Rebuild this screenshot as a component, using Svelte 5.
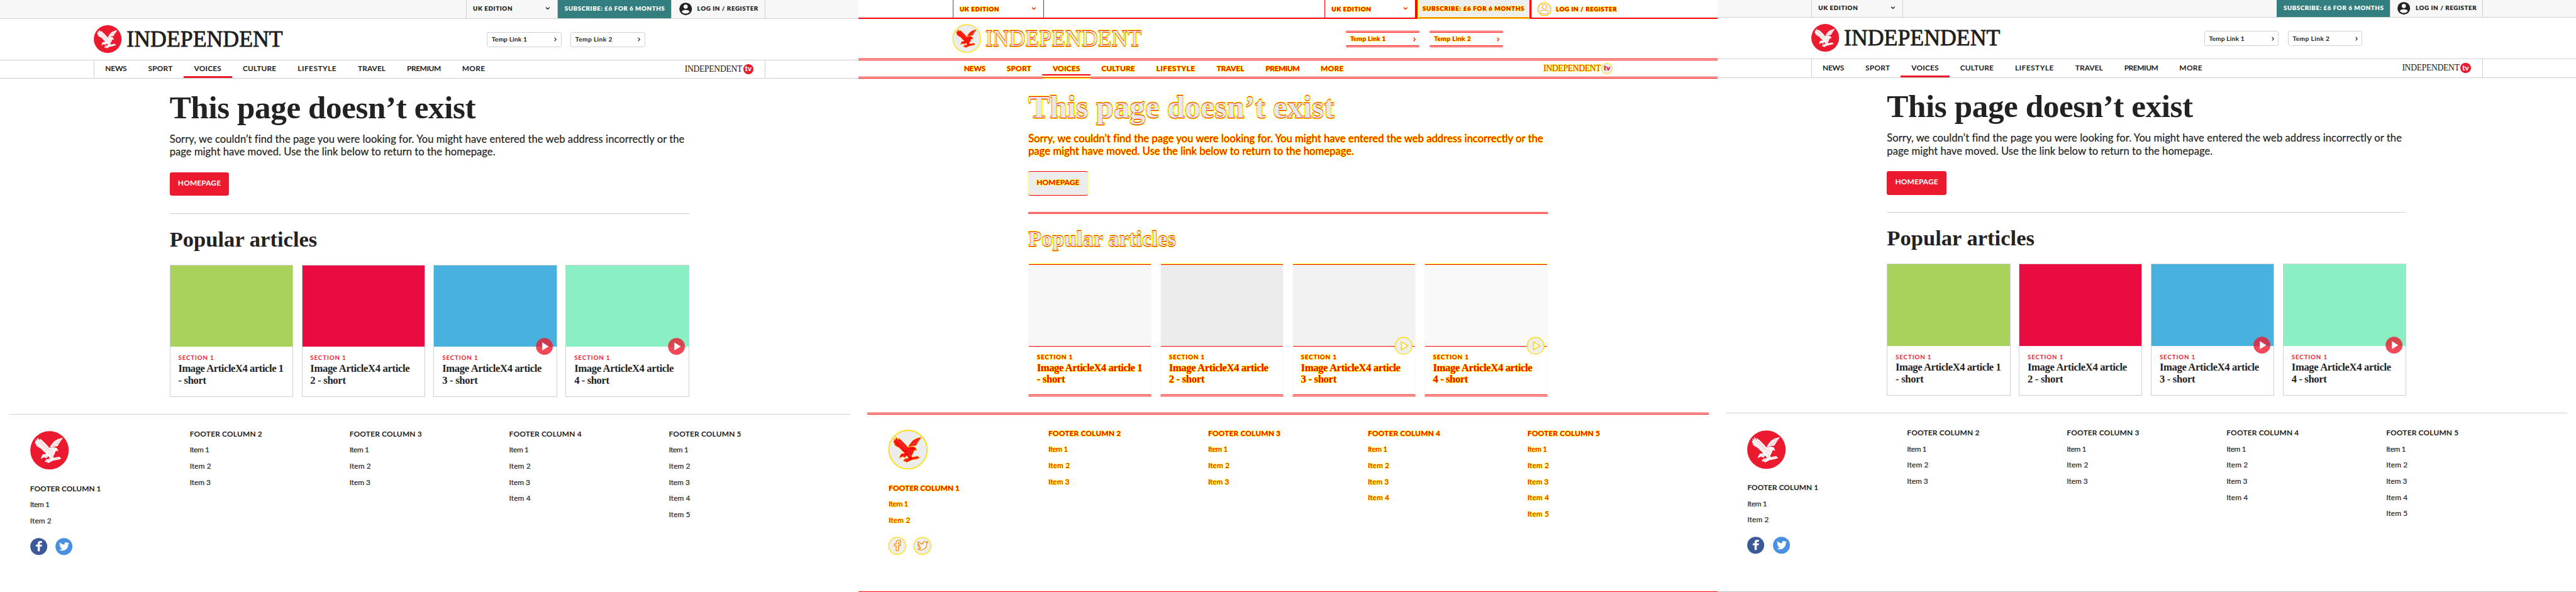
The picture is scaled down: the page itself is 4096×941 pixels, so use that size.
<script>
  const UNIT = 4096 / 4800;

  // Spreads the letters of a label so that it takes the given width.
  function fit(node, width) {
    const natural = node.getBoundingClientRect().width;
    const count = node.textContent.length;
    node.style.letterSpacing = (width * UNIT - natural) / count + 'px';
  }

  const panels = ['before', 'diff', 'after'];

  const nav = [
    ['NEWS', 40], ['SPORT', 46], ['VOICES', 51], ['CULTURE', 62.5],
    ['LIFESTYLE', 72.5], ['TRAVEL', 51.5], ['PREMIUM', 63], ['MORE', 43]
  ];

  const cards = [
    { tone: 'green', lines: [['Image ArticleX4 article 1', 196], ['- short', 52]] },
    { tone: 'crimson', lines: [['Image ArticleX4 article', 185], ['2 - short', 66]] },
    { tone: 'blue', play: true, lines: [['Image ArticleX4 article', 185], ['3 - short', 66]] },
    { tone: 'mint', play: true, lines: [['Image ArticleX4 article', 185], ['4 - short', 65]] }
  ];

  const columns = [2, 3, 3, 4, 5];
  const itemWidths = [36, 40, 39, 40, 40];
</script>

{#snippet eagle()}
  <svg class="eagle" viewBox="0 0 72 72">
    <circle class="disc" cx="36" cy="36" r="35.8" />
    <g class="bird">
      <path d="M13.5 12 L18 18 L18 14 L24 19 L31 26 L36 32 L39 31 L45 30.5 L50 32 L52.5 38 L49 37 L47 38 L46 42 L43 47 L43.5 50 L54 48 L58 51.5 L52 53.5 L42 55.5 L39 57 L33 60 L32 58 L27 57.5 L30 53 L37 52 L34 47 L30 51 L26 49 L19.500 52 L23 44 L30 42.500 L24 37 L20 33 L12 28 L8.500 20 L10.500 20 L10 15 L13 18 Z" />
      <path d="M61 12.500 L52 15 L45 19 L39 26 L36.500 31 L43 30 L51 28 L54 23 L57 19 Z" />
    </g>
    <g class="hatch">
      <path d="M13 18 L31 38 M17 18 L34 37 M21 20 L36 36 M11 23 L25 36 M39 28 L56 14 M41 29 L58 16 M44 29.500 L57 18 M36 37 L45 43 M38 34 L45 39 M34 40 L42 46 M25 49 L30 45 M28 50 L32 46 M30 56 L38 54 M39 46 L40 51 M46 52 L54 51" />
    </g>
  </svg>
{/snippet}

{#snippet edition()}
  <div class="edition">
    <span class="t" use:fit={74}>UK EDITION</span>
    <svg class="down" viewBox="0 0 10 6"><path d="M1.300 1 L5 4.600 L8.700 1" /></svg>
  </div>
{/snippet}

{#snippet page(kind)}
  <section class="page {kind}">
    <div class="topbar">
      <div class="inner">
        {#if kind !== 'before'}{@render edition()}{/if}
        <div class="push"></div>
        {#if kind !== 'after'}{@render edition()}{/if}
        <div class="subscribe"><span class="t" use:fit={kind === 'diff' ? 190 : 187}>SUBSCRIBE: £6 FOR 6 MONTHS</span></div>
        <div class="login">
          <svg class="user" viewBox="0 0 24 24">
            <circle class="face" cx="12" cy="12" r="11.800" />
            <circle class="cut" cx="12" cy="7.700" r="3.900" />
            <path class="cut" d="M4.800 17.200 C5.200 12.800 18.800 12.800 19.200 17.200 C16 21.800 8 21.800 4.800 17.200 Z" />
          </svg>
          <span class="t" use:fit={114}>LOG IN / REGISTER</span>
        </div>
      </div>
    </div>

    <header>
      {@render eagle()}
      <div class="wordmark"><span class="t big" use:fit={291}>INDEPENDENT</span></div>
      <div class="links">
        {#each [['Temp Link 1', 66], ['Temp Link 2', 69]] as [label, width]}
          <a class="link" href="#top">
            <span class="t" use:fit={width}>{label}</span>
            <svg class="right" viewBox="0 0 6 10"><path d="M1 1 L4.600 5 L1 9" /></svg>
          </a>
        {/each}
      </div>
    </header>

    <nav>
      <div class="inner">
        {#each nav as [label, width]}
          <div class="tab" class:active={label === 'VOICES'}><span class="t" use:fit={width}>{label}</span></div>
        {/each}
        <div class="push"></div>
        <div class="tv"><span class="t small-mark" use:fit={107}>INDEPENDENT</span><span class="dot">tv</span></div>
      </div>
    </nav>

    <main>
      <h1><span class="t big" use:fit={570}>This page doesn’t exist</span></h1>
      <p>
        <span class="t" use:fit={959}>Sorry, we couldn’t find the page you were looking for. You might have entered the web address incorrectly or the</span>
        <span class="t" use:fit={607}>page might have moved. Use the link below to return to the homepage.</span>
      </p>
      <div class="button"><span class="t" use:fit={80}>HOMEPAGE</span></div>
      <div class="rule"></div>
      <h2><span class="t big" use:fit={275}>Popular articles</span></h2>
      <div class="cards">
        {#each cards as card}
          <article>
            <div class="photo {card.tone}">
              {#if card.play}
                <svg class="play" viewBox="0 0 32 32"><circle cx="16" cy="16" r="15.700" /><path d="M12 8.500 L24 16 L12 23.500 Z" /></svg>
              {/if}
            </div>
            <div class="copy">
              <div class="label"><span class="t" use:fit={67}>SECTION 1</span></div>
              {#each card.lines as [text, width]}
                <div class="title"><span class="t" use:fit={width}>{text}</span></div>
              {/each}
            </div>
          </article>
        {/each}
      </div>
    </main>

    <footer>
      {#each columns as count, i}
        <div class="column">
          {#if i === 0}{@render eagle()}{/if}
          <h3><span class="t" use:fit={i === 0 ? 132 : 135}>FOOTER COLUMN {i + 1}</span></h3>
          {#each itemWidths.slice(0, count) as width, n}
            <div class="item"><span class="t" use:fit={width}>Item {n + 1}</span></div>
          {/each}
          {#if i === 0}
            <div class="social">
              <svg viewBox="0 0 32 32"><circle class="fb" cx="16" cy="16" r="15.800" /><path class="glyph" d="M14 25 V16 H10.500 V12.700 H14 V10.500 C14 7.500 15.800 6 18.300 6 H22 V9.500 H19.800 C18.500 9.500 18 10.100 18 11.200 V12.700 H22 L21.600 16 H18 V25 Z" /></svg>
              <svg viewBox="0 0 32 32"><circle class="tw" cx="16" cy="16" r="15.800" /><path class="glyph" d="M26 9.900 C25.300 10.200 24.500 10.400 23.800 10.500 C24.600 10 25.200 9.300 25.500 8.400 C24.700 8.800 23.900 9.200 23 9.300 C20.500 6.700 16 8.700 16.800 12.600 C13.400 12.400 10.400 10.800 8.400 8.300 C7.300 10.200 7.900 12.600 9.700 13.800 C9 13.800 8.400 13.600 7.800 13.300 C7.800 15.200 9.200 16.900 11.100 17.300 C10.500 17.500 9.900 17.500 9.200 17.400 C9.800 19 11.200 20.200 13 20.200 C11.300 21.600 9.100 22.200 7 21.900 C14 26.300 24 22.300 24 12.400 V11.800 C24.800 11.300 25.400 10.600 26 9.900 Z" /></svg>
            </div>
          {/if}
        </div>
      {/each}
    </footer>
  </section>
{/snippet}

<div class="sheet">
  {#each panels as kind}
    {@render page(kind)}
  {/each}
</div>

<style>
  :global(html) { font-size: 8.53333px; }
  :global(body) { margin: 0; background: #fff; overflow: hidden; }
  * { box-sizing: border-box; }

  .sheet {
    display: flex;
    width: 480rem;
    height: 941px;
    overflow: hidden;
    font-family: Lato, "Open Sans", sans-serif;
    color: #222;
  }
  .page {
    --line: #d0d0d0;
    --red: #ec1a2e;
    width: 160rem;
    height: 941px;
    flex: none;
    overflow: hidden;
    background: #fff;
  }
  .after { box-shadow: inset 0 -1px #bbb; }
  .t { display: inline-block; white-space: pre; }
  .push { flex: 1; }
  svg { display: block; flex: none; overflow: visible; }

  .topbar { height: 3.5rem; background: #f7f7f7; border-bottom: 1px solid var(--line); }
  .after .topbar { height: 3.3rem; }
  .inner { display: flex; width: 125.1rem; height: 100%; margin-left: 17.5rem; }
  .edition, .subscribe, .login {
    display: flex;
    align-items: center;
    font-size: 1.15rem;
    font-weight: 800;
    padding-bottom: 0.28rem;
  }
  .edition {
    width: 17.1rem;
    padding-left: 1.2rem;
    padding-right: 1.3rem;
    justify-content: space-between;
    border-left: 1px solid var(--line);
    border-right: 1px solid var(--line);
  }
  .down { width: 0.9rem; height: 0.55rem; }
  .down path, .right path { fill: none; stroke: #222; stroke-width: 1.7; }
  .subscribe { width: 21.1rem; padding-left: 1.3rem; background: #337f80; color: #fff; }
  .login { width: 17.6rem; padding-left: 1.4rem; gap: 1rem; border-left: 1px solid var(--line); border-right: 1px solid var(--line); }
  .after .login { width: 17.3rem; padding-left: 1.3rem; }
  .user { width: 2.4rem; height: 2.4rem; margin-top: 0.28rem; }
  .user .face { fill: #222; }
  .user .cut { fill: #f7f7f7; }

  header { display: flex; align-items: flex-start; height: 7.6rem; padding: 1.2rem 0 0 17.5rem; }
  header .eagle { width: 5.2rem; height: 5.2rem; }
  .wordmark {
    width: 67.1rem;
    padding-left: 0.9rem;
    font: 400 4.2rem/5.2rem "Liberation Serif", serif;
    color: #1d1d1b;
    -webkit-text-stroke: 0.09rem #1d1d1b;
  }
  .links { display: flex; gap: 1.7rem; padding: 1.3rem 0 0 0.9rem; }
  .link {
    display: flex;
    align-items: center;
    justify-content: space-between;
    width: 13.9rem;
    height: 2.8rem;
    padding: 0 0.7rem 0.2rem 0.8rem;
    border: 1px solid var(--line);
    border-radius: 0.4rem;
    font-size: 1.2rem;
    font-weight: 700;
    color: #222;
    text-decoration: none;
  }
  .right { width: 0.5rem; height: 0.85rem; margin-top: 0.2rem; }

  nav { height: 3.6rem; border-top: 1px solid var(--line); border-bottom: 1px solid var(--line); }
  nav .inner { border-left: 1px solid var(--line); border-right: 1px solid var(--line); }
  .tab { display: flex; align-items: center; padding: 0 1.99rem; font-size: 1.4rem; font-weight: 700; border-bottom: 0.4rem solid transparent; padding-top: 0.1rem; }
  .tab.active { border-bottom-color: var(--red); }
  .tv { display: flex; align-items: center; gap: 0.2rem; padding: 0 2.1rem 0.1rem 0; }
  .small-mark { font: 400 1.6rem/2rem "Liberation Serif", serif; color: #1d1d1b; }
  .dot {
    display: grid;
    place-items: center;
    width: 1.9rem;
    height: 1.9rem;
    border-radius: 50%;
    background: var(--red);
    color: #fff;
    font: 900 1.35rem/1.3rem Lato, sans-serif;
    padding-bottom: 0.2rem;
  }

  main { padding: 2.2rem 31.6rem 0; }
  h1, h2, h3, p { margin: 0; }
  h1 { font: 700 6rem/6.4rem "Liberation Serif", serif; height: 6.4rem; }
  p { margin-top: 1.4rem; height: 4.8rem; margin-bottom: 0.1rem; font-size: 1.95rem; line-height: 2.4rem; -webkit-text-stroke: 0.02rem #222; }
  p .t { display: table; }
  .button {
    display: flex;
    align-items: center;
    justify-content: center;
    width: 11.1rem;
    height: 4.4rem;
    margin-top: 2.6rem;
    padding-bottom: 0.46rem;
    border-radius: 0.4rem;
    background: var(--red);
    color: #fff;
    font-size: 1.4rem;
    font-weight: 700;
  }
  .rule { height: 1px; margin-top: 3.2rem; background: var(--line); }
  h2 { margin-top: 2.6rem; font: 700 4.05rem/4.4rem "Liberation Serif", serif; height: 4.4rem; }
  .cards { display: grid; grid-template-columns: repeat(4, 23rem); gap: 1.6rem; margin-top: 2.5rem; }
  article { height: 24.6rem; border: 1px solid var(--line); }
  .photo { position: relative; height: 15.2rem; }
  .green { background: #a9d25d; }
  .crimson { background: #ea0b40; }
  .blue { background: #49b1de; }
  .mint { background: #8af0c4; }
  .play { position: absolute; right: 0.6rem; bottom: -1.5rem; width: 3.2rem; height: 3.2rem; }
  .play circle { fill: var(--red); opacity: 0.8; }
  .play path { fill: #fff; }
  .copy { padding: 1.4rem 0 0 1.5rem; }
  .label { font-size: 1.15rem; line-height: 1.4rem; height: 1.4rem; font-weight: 700; color: var(--red); margin-bottom: 0.2rem; }
  .title { font: 700 1.95rem/2.2rem "Liberation Serif", serif; height: 2.2rem; }

  footer {
    display: grid;
    grid-template-columns: repeat(5, 29.76rem);
    width: 156.8rem;
    margin: 3.15rem 1.6rem 0;
    padding: 2.15rem 0 0 4rem;
    border-top: 1px solid var(--line);
  }
  .column .eagle { width: 7.2rem; height: 7.2rem; margin: 1rem 0 2rem; }
  h3 { font-size: 1.4rem; line-height: 3rem; height: 3rem; font-weight: 700; }
  .item { font-size: 1.4rem; line-height: 3rem; height: 3rem; -webkit-text-stroke: 0.02rem #222; }
  .social { display: flex; gap: 1.5rem; margin-top: 1.7rem; }
  .social svg { width: 3.2rem; height: 3.2rem; }
  .fb { fill: #3b5998; }
  .tw { fill: #4a90e2; }
  .glyph { fill: #fff; }
  .disc { fill: var(--red); }
  .bird { fill: #fff; }
  .hatch { fill: none; stroke: var(--red); stroke-width: 0.7; stroke-dasharray: 2 0.7; opacity: 0.75; }

  /* Comparison panel: changed pixels in red, their fringe in yellow. */
  .diff { --line: #f7f7f7; --red: #ececec; box-shadow: inset 0 -1px #f00; }
  .diff .t {
    color: #f00;
    -webkit-text-stroke: 0;
    text-shadow: 0.8px 0 #ff0, -0.8px 0 #ff0, 0 1px #ff0, 0 -1px #ff0;
  }
  .diff .t.big {
    color: #e8e8e8;
    text-shadow: 0 -0.8px #f00, 0 0.8px #f00, 1.5px 0 #ff0, -1.5px 0 #ff0, 0 2px #ff0, 0 -2px #ff0, 1px 1px #ff0, -1px -1px #ff0, 1px -1px #ff0, -1px 1px #ff0;
  }
  .diff .topbar { background: #fff; border-bottom: 0.3rem solid #f00; }
  .diff .edition { border-left-color: #f00; border-right-color: #f00; width: 17rem; padding-bottom: 0.1rem; }
  .diff .push + .edition { border-right: 0; width: 16.9rem; }
  .diff .subscribe {
    width: 21.7rem;
    height: 3.5rem;
    padding-left: 0.9rem;
    padding-bottom: 0.4rem;
    background: #eee;
    border-left: 0.5rem solid #f00;
    border-right: 0.4rem solid #f00;
    box-shadow: inset 1px 0 #ff0, inset -1px 0 #ff0, inset 0 -1px #ff0, inset 0 -2px #f00, inset 0 -3px #ff0;
  }
  .diff .login { width: 17.2rem; padding-left: 1rem; padding-bottom: 0.1rem; border-left: 1px solid #ff0; gap: 0.9rem; }
  .diff .user { width: 2.5rem; height: 2.5rem; margin-top: 0.2rem; }
  .diff .user .face { fill: #eee; stroke: #fc0; stroke-width: 1.5; }
  .diff .user .cut { fill: #fff; stroke: #f90; }
  .diff .down path, .diff .right path { stroke: #f40; stroke-width: 2.2; }
  .diff header { height: 7.4rem; padding-top: 1.1rem; }
  .diff .wordmark { -webkit-text-stroke: 0; }
  .diff .disc { stroke: #fd0; stroke-width: 2; }
  .diff .bird { fill: #f00; stroke: #fc0; stroke-width: 0.8; }
  .diff .hatch { stroke: #fff; }
  .diff .links { padding-top: 1.2rem; }
  .diff .link {
    height: 3rem;
    border-top: 3px double #f00;
    border-bottom: 3px double #f00;
  }
  .diff nav { height: 3.8rem; margin-bottom: -0.1rem; border-top: 3px double #f00; border-bottom: 3px double #f00; }
  .diff .tab { border-bottom: 0; padding-bottom: 0.2rem; }
  .diff .tab.active {
    height: calc(100% + 3px);
    padding-bottom: calc(0.2rem + 3px);
    background: linear-gradient(#f00, #f00) 0 calc(100% - 5px) / 100% 2px no-repeat;
    box-shadow: inset 0 -1px #ff0, inset 0 -2px #f00, inset 0 -3px #ff0;
  }
  .diff .small-mark { color: #e33; }
  .diff .dot { color: #f00; box-shadow: 0 0 0 1px #fd0; }
  .diff .button { border-top: 0.2rem solid #f00; border-bottom: 0.2rem solid #f00; height: 4.6rem; margin: 2.5rem 0 -0.1rem; box-shadow: -1px 0 #ffa, 1px 0 #ffa; }
  .diff .rule { height: 3px; margin: 3.1rem 0 -0.1rem; background: none; border-top: 1px solid #f00; border-bottom: 1px solid #f00; }
  .diff h2 { margin-top: 2.5rem; }
  .diff article {
    height: 24.8rem;
    margin: -0.1rem 0;
    border-top: 0;
    border-bottom: 3px double #f00;
    box-shadow: inset 0 1px #ff0, inset 0 2px #f00, inset 0 3px #ff0;
    padding-top: 0.3rem;
  }
  .diff .photo { border-bottom: 0.2rem solid #f00; }
  .diff .copy { padding-top: 1.3rem; }
  .diff .green { background: #f7f7f7; }
  .diff .crimson { background: #ececec; }
  .diff .blue { background: #f2f2f2; }
  .diff .mint { background: #f9f9f9; }
  .diff .play { bottom: -1.6rem; }
  .diff .play circle { fill: #eee; opacity: 1; stroke: #fd0; stroke-width: 1.5; }
  .diff .play path { stroke: #fc0; stroke-width: 1.5; }
  .diff footer { margin-top: 3.1rem; border-top: 3px double #f00; padding-top: 2rem; }
  .diff .fb, .diff .tw { fill: #eee; stroke: #fd0; stroke-width: 1.6; }
  .diff .glyph { stroke: #f80; stroke-width: 1.5; }
</style>
